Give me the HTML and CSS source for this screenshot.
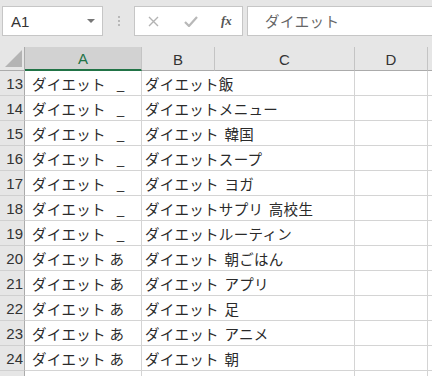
FILE: index.html
```html
<!DOCTYPE html>
<html lang="ja">
<head>
    <meta charset="UTF-8">
    <title>Sheet</title>
    <link rel="stylesheet" href="styles.css">
</head>
<body>
    <!-- Formula bar -->
    <div class="toolbar">
        <div class="name-box">
            <span class="name-text">A1</span>
            <span class="drop-arrow"></span>
        </div>
        <div class="grip">
            <span></span><span></span><span></span>
        </div>
        <div class="fx-box">
            <svg class="icon-x" width="11" height="11" viewBox="0 0 11 11">
                <path d="M1 1 L10 10 M10 1 L1 10" stroke="#b3b3b3" stroke-width="1.4" fill="none"/>
            </svg>
            <svg class="icon-check" width="14" height="11" viewBox="0 0 14 11">
                <path d="M1 6 L5 10 L13 1" stroke="#b8b8b8" stroke-width="2.2" fill="none"/>
            </svg>
            <span class="fx">fx</span>
        </div>
        <div class="formula-input">ダイエット</div>
    </div>

    <!-- Grid -->
    <div class="sheet">
        <div class="corner"><span class="corner-tri"></span></div>
        <div class="col-head selected">A</div>
        <div class="col-head">B</div>
        <div class="col-head">C</div>
        <div class="col-head">D</div>
        <div class="col-head last"></div>

        <div class="row-head">13</div><div class="cell a u">ダイエット _</div><div class="cell bc">ダイエット飯</div><div class="cell"></div><div class="cell last"></div>
        <div class="row-head">14</div><div class="cell a u">ダイエット _</div><div class="cell bc">ダイエットメニュー</div><div class="cell"></div><div class="cell last"></div>
        <div class="row-head">15</div><div class="cell a u">ダイエット _</div><div class="cell bc">ダイエット 韓国</div><div class="cell"></div><div class="cell last"></div>
        <div class="row-head">16</div><div class="cell a u">ダイエット _</div><div class="cell bc">ダイエットスープ</div><div class="cell"></div><div class="cell last"></div>
        <div class="row-head">17</div><div class="cell a u">ダイエット _</div><div class="cell bc">ダイエット ヨガ</div><div class="cell"></div><div class="cell last"></div>
        <div class="row-head">18</div><div class="cell a u">ダイエット _</div><div class="cell bc">ダイエットサプリ 高校生</div><div class="cell"></div><div class="cell last"></div>
        <div class="row-head">19</div><div class="cell a u">ダイエット _</div><div class="cell bc">ダイエットルーティン</div><div class="cell"></div><div class="cell last"></div>
        <div class="row-head">20</div><div class="cell a">ダイエット あ</div><div class="cell bc">ダイエット 朝ごはん</div><div class="cell"></div><div class="cell last"></div>
        <div class="row-head">21</div><div class="cell a">ダイエット あ</div><div class="cell bc">ダイエット アプリ</div><div class="cell"></div><div class="cell last"></div>
        <div class="row-head">22</div><div class="cell a">ダイエット あ</div><div class="cell bc">ダイエット 足</div><div class="cell"></div><div class="cell last"></div>
        <div class="row-head">23</div><div class="cell a">ダイエット あ</div><div class="cell bc">ダイエット アニメ</div><div class="cell"></div><div class="cell last"></div>
        <div class="row-head">24</div><div class="cell a">ダイエット あ</div><div class="cell bc">ダイエット 朝</div><div class="cell"></div><div class="cell last"></div>
        <div class="row-head"></div><div class="cell a"></div><div class="cell bc"></div><div class="cell"></div><div class="cell last"></div>
    </div>
</body>
</html>
```

FILE: styles.css
```css
body {
    margin: 0;
    width: 432px;
    height: 376px;
    overflow: hidden;
    background-color: #ffffff;
    font-family: "Noto Sans CJK JP", "Liberation Sans", sans-serif;
    color: #222222;
}

/* Formula bar */
.toolbar {
    height: 47px;
    box-sizing: border-box;
    padding: 6px 0 0 2px;
    background-color: #e6e6e6;
    display: flex;
    align-items: flex-start;
}

.name-box {
    width: 101px;
    height: 30px;
    box-sizing: border-box;
    background-color: #ffffff;
    border: 1px solid #c6c6c6;
    display: flex;
    align-items: center;
    justify-content: space-between;
    padding: 0 6px 0 8px;
}

.name-text {
    font-family: "Liberation Sans", sans-serif;
    font-size: 15px;
    color: #333333;
}

.drop-arrow {
    width: 0;
    height: 0;
    border-left: 4px solid transparent;
    border-right: 4px solid transparent;
    border-top: 4px solid #777777;
    margin-right: 1px;
}

.grip {
    width: 31px;
    height: 30px;
    display: flex;
    flex-direction: column;
    align-items: center;
    justify-content: center;
    gap: 2px;
}

.grip span {
    width: 2px;
    height: 2px;
    background-color: #b8b8b8;
}

.fx-box {
    width: 109px;
    height: 30px;
    box-sizing: border-box;
    background-color: #ffffff;
    border: 1px solid #c6c6c6;
    display: flex;
    align-items: center;
    padding-left: 13px;
}

.icon-x {
    margin-right: 25px;
}

.icon-check {
    margin-right: 23px;
}

.fx {
    font-family: "Liberation Serif", serif;
    font-style: italic;
    font-weight: bold;
    font-size: 13px;
    color: #555555;
}

.formula-input {
    flex: 1;
    height: 30px;
    box-sizing: border-box;
    margin-left: 4px;
    background-color: #ffffff;
    border: 1px solid #c6c6c6;
    border-right: none;
    padding-left: 17px;
    font-size: 14.5px;
    letter-spacing: 0.4px;
    line-height: 28px;
    color: #666666;
}

/* Sheet grid */
.sheet {
    height: 329px;
    overflow: hidden;
    display: grid;
    grid-template-columns: 25px 117px 73px 140px 73px 1fr;
    grid-template-rows: 24px repeat(13, 25px);
}

.corner {
    background-color: #e6e6e6;
    border-right: 1px solid #ababab;
    border-bottom: 1px solid #ababab;
    position: relative;
}

.corner-tri {
    position: absolute;
    right: 2px;
    bottom: 3px;
    width: 0;
    height: 0;
    border-left: 17px solid transparent;
    border-bottom: 17px solid #b4b4b4;
}

.col-head {
    background-color: #e6e6e6;
    border-right: 1px solid #c4c4c4;
    border-bottom: 1px solid #ababab;
    font-family: "Liberation Sans", sans-serif;
    font-size: 15px;
    color: #333333;
    display: flex;
    align-items: center;
    justify-content: center;
    padding-top: 1px;
}

.col-head.selected {
    background-color: #d2d2d2;
    color: #217346;
    border-bottom: 2px solid #217346;
}

.col-head.last {
    border-right: none;
}

.row-head {
    background-color: #e6e6e6;
    border-right: 1px solid #ababab;
    border-bottom: 1px solid #d0d0d0;
    font-family: "Liberation Sans", sans-serif;
    font-size: 15px;
    color: #333333;
    display: flex;
    align-items: center;
    justify-content: flex-end;
    padding-right: 1px;
}

.cell {
    border-right: 1px solid #d4d4d4;
    border-bottom: 1px solid #d4d4d4;
    font-size: 14.5px;
    letter-spacing: 0.3px;
    word-spacing: 2px;
    color: #2a2a2a;
    white-space: nowrap;
    display: flex;
    align-items: center;
    padding-left: 3px;
    padding-top: 1px;
}

.cell.a {
    padding-left: 7px;
    word-spacing: 0;
}

.cell.a.u {
    word-spacing: 7px;
}

.cell.bc {
    grid-column: span 2;
}

.cell.last {
    border-right: none;
}
```
